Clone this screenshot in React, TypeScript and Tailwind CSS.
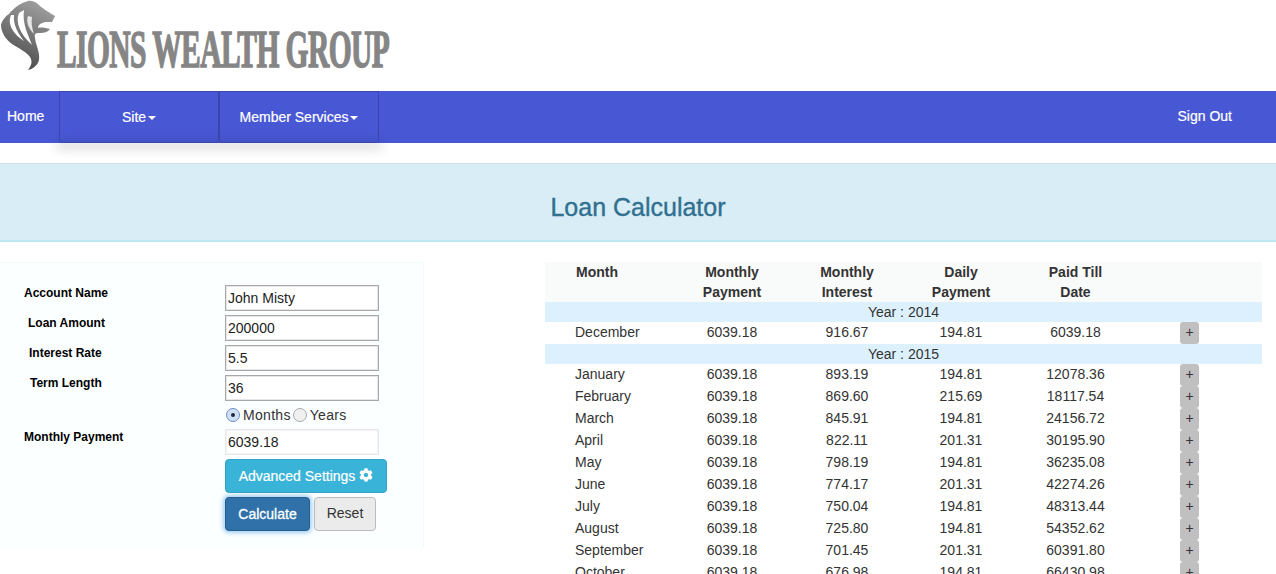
import React from "react";
import { FaCog } from "react-icons/fa";

const rows: [string, string, string, string][] = [
  ["January", "893.19", "194.81", "12078.36"],
  ["February", "869.60", "215.69", "18117.54"],
  ["March", "845.91", "194.81", "24156.72"],
  ["April", "822.11", "201.31", "30195.90"],
  ["May", "798.19", "194.81", "36235.08"],
  ["June", "774.17", "201.31", "42274.26"],
  ["July", "750.04", "194.81", "48313.44"],
  ["August", "725.80", "194.81", "54352.62"],
  ["September", "701.45", "201.31", "60391.80"],
  ["October", "676.98", "194.81", "66430.98"],
];

const cols = "grid grid-cols-[131px_114px_114px_114px_115px_1fr]";

function Lion() {
  return (
    <svg width="58" height="72" viewBox="0 0 58 72" className="shrink-0">
      <defs>
        <linearGradient id="lg" x1="0.7" y1="0" x2="0.3" y2="1">
          <stop offset="0" stopColor="#a0a0a0" />
          <stop offset="0.55" stopColor="#707070" />
          <stop offset="1" stopColor="#454545" />
        </linearGradient>
      </defs>
      <path
        d="M28 1 C33 0 37 3 40 6 C44 9 48 12 55 16 L52 22 L45 22 C41 23 38 25 38 28 C41 27 46 28 50 29 C48 32 44 33 40 33 C36 33 34 33 35 38 C36 46 40 52 39 60 C38 65 33 69 28 70 C31 66 33 62 30 57 C27 52 18 48 12 44 C6 40 1 32 1 25 C2 20 6 16 9 14 C14 8 20 3 28 1 Z"
        fill="url(#lg)"
      />
      <path d="M11 15 C7 24 13 34 24 41 C18 33 13 25 14 15 Z" fill="#fff" />
      <path d="M19 13 C15 22 20 34 32 45 C28 34 22 24 24 10 Z" fill="#fff" />
      <path d="M28 16 C26 22 28 28 34 34 C32 28 31 22 32 17 Z" fill="#fff" opacity="0.8" />
    </svg>
  );
}

function Field({ label, value, labelCls, muted }: { label: string; value: string; labelCls: string; muted?: boolean }) {
  return (
    <div className="flex h-[30px] items-start">
      <div className={`w-[225px] text-[12px] font-bold leading-[16px] text-black ${labelCls}`}>{label}</div>
      <div
        className={`flex h-[26px] w-[154px] items-center border bg-white px-[2px] text-[14px] text-[#222] ${
          muted
            ? "border-[#e8e8e8] shadow-[inset_0_0_0_1px_#f2f2f2]"
            : "border-[#a9a9a9] shadow-[inset_0_0_0_1px_#e6e6e6]"
        }`}
      >
        {value}
      </div>
    </div>
  );
}

function Plus() {
  return (
    <span className="flex h-[22px] w-[19px] items-center justify-center rounded-[3px] bg-[#c0c0c0] pb-[2px] text-[14px] leading-none text-[#333]">
      +
    </span>
  );
}

function YearRow({ year }: { year: string }) {
  return <div className="flex h-[20px] items-center justify-center bg-[#dcf1fd] text-[14px] text-[#333]">Year : {year}</div>;
}

function DataRow({ r }: { r: [string, string, string, string] }) {
  return (
    <div className={`${cols} h-[22px] items-start bg-white text-[14px] leading-[20px] text-[#333]`}>
      <div className="pl-[30px]">{r[0]}</div>
      <div className="pr-[2px] text-center">6039.18</div>
      <div className="text-center">{r[1]}</div>
      <div className="text-center">{r[2]}</div>
      <div className="text-center">{r[3]}</div>
      <div className="pl-[47px]">
        <Plus />
      </div>
    </div>
  );
}

export default function App() {
  return (
    <div className="h-[574px] overflow-hidden bg-white font-['Liberation_Sans',Arial,sans-serif]">
      <header className="flex h-[91px] items-start">
        <Lion />
        <span className="mt-[24px] ml-[-1px] inline-block origin-left scale-x-[0.567] whitespace-nowrap font-['Liberation_Serif',serif] text-[52px] font-bold leading-[52px] text-[#858585] [-webkit-text-stroke:1.5px_#858585] [letter-spacing:-1px]">
          LIONS WEALTH GROUP
        </span>
      </header>

      <nav className="flex h-[52px] items-stretch bg-[#4858d4] text-[14px] text-white [-webkit-text-stroke:0.2px_#ffffff]">
        <a className="flex w-[59px] items-center pb-[2px] pl-[7px]">Home</a>
        <a className="z-10 flex w-[160px] items-center justify-center rounded-b-[3px] border border-[#3a46ac]">
          Site
          <span className="ml-[2px] mt-[1px] border-x-[4px] border-t-[4px] border-x-transparent border-t-white" />
        </a>
        <a className="z-10 flex w-[160px] items-center justify-center rounded-b-[3px] border border-[#3a46ac]">
          Member Services
          <span className="ml-[2px] mt-[1px] border-x-[4px] border-t-[4px] border-x-transparent border-t-white" />
        </a>
        <div className="flex-1" />
        <a className="flex items-center pb-[1px] pr-[44px]">Sign Out</a>
      </nav>
      <div className="ml-[59px] h-0 w-[320px] shadow-[0_2px_12px_3px_rgba(0,0,0,0.2)]" />

      <section className="mt-[20px] flex h-[79px] items-center justify-center border-y border-t-[#cfe3ee] border-b-2 border-b-[#bce8f1] bg-[#d9edf7] pt-[10px]">
        <h1 className="text-[25px] font-normal leading-[28px] text-[#31708f] [-webkit-text-stroke:0.4px_#31708f]">Loan Calculator</h1>
      </section>

      <main className="mt-[20px] flex items-start">
        <div className="h-[288px] w-[424px] rounded-[4px] border-t border-r border-[#f5f8f8] bg-[#fbffff] pt-[22px]">
          <div className="flex flex-col">
            <Field label="Account Name" value="John Misty" labelCls="pl-[24px]" />
            <Field label="Loan Amount" value="200000" labelCls="pl-[28px]" />
            <Field label="Interest Rate" value="5.5" labelCls="pl-[29px]" />
            <Field label="Term Length" value="36" labelCls="pl-[30px]" />
            <div className="flex h-[24px] items-start pl-[226px] text-[14px] leading-[20px] text-[#333] [letter-spacing:0.3px]">
              <span className="mt-[3px] flex h-[14px] w-[14px] items-center justify-center rounded-full border border-[#6f8fc9] bg-[#cfdff5]">
                <span className="h-[4px] w-[4px] rounded-full bg-[#1f2a44]" />
              </span>
              <span className="ml-[3px]">Months</span>
              <span className="ml-[2px] mt-[3px] h-[14px] w-[14px] rounded-full border border-[#a8a8a8] bg-[#f0f0f0]" />
              <span className="ml-[3px]">Years</span>
            </div>
            <Field label="Monthly Payment" value="6039.18" labelCls="pl-[24px]" muted />
            <div className="ml-[225px] flex h-[34px] w-[162px] items-center justify-center rounded-[4px] border border-[#31a3c6] bg-[#39b3d7] text-[14px] text-white [-webkit-text-stroke:0.2px_#ffffff]">
              Advanced Settings
              <FaCog className="ml-[4px] mb-[2px] text-[14px]" />
            </div>
            <div className="ml-[225px] mt-[4px] flex items-center gap-[4px]">
              <div className="flex h-[34px] w-[85px] items-center justify-center rounded-[4px] border border-[#285e8e] bg-[#3071a9] text-[14px] text-white shadow-[0_0_4px_2px_rgba(102,175,233,0.6)] [-webkit-text-stroke:0.3px_#ffffff]">
                Calculate
              </div>
              <div className="flex h-[34px] w-[62px] items-center justify-center rounded-[4px] border border-[#bbbbbb] bg-[#ebebeb] pb-[1px] text-[14px] text-[#333]">
                Reset
              </div>
            </div>
          </div>
        </div>

        <div className="ml-[121px] w-[717px]">
          <div className={`${cols} h-[40px] bg-[#f9fafa] text-[14px] font-bold leading-[20px] text-[#333]`}>
            <div className="pl-[31px]">Month</div>
            <div className="pr-[2px] text-center">Monthly<br />Payment</div>
            <div className="text-center">Monthly<br />Interest</div>
            <div className="text-center">Daily<br />Payment</div>
            <div className="text-center">Paid Till<br />Date</div>
            <div />
          </div>
          <YearRow year="2014" />
          <DataRow r={["December", "916.67", "194.81", "6039.18"]} />
          <YearRow year="2015" />
          {rows.map((r) => (
            <DataRow key={r[0]} r={r} />
          ))}
        </div>
      </main>
    </div>
  );
}
